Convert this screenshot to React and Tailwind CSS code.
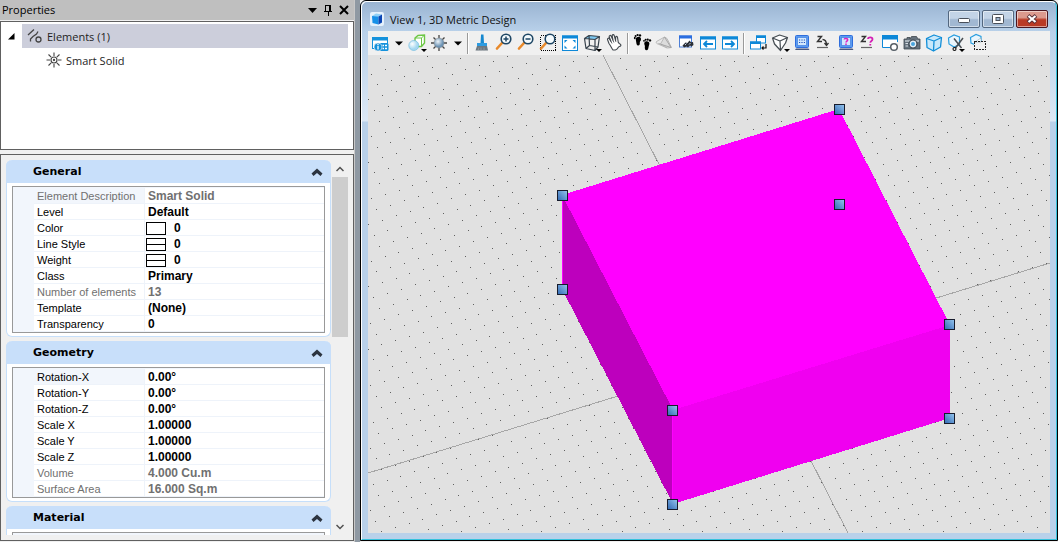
import { useState } from "react";

const general = [
  { label: "Element Description", value: "Smart Solid", readOnly: true },
  { label: "Level", value: "Default" },
  { label: "Color", value: "0", swatch: "box" },
  { label: "Line Style", value: "0", swatch: "line" },
  { label: "Weight", value: "0", swatch: "line" },
  { label: "Class", value: "Primary" },
  { label: "Number of elements", value: "13", readOnly: true },
  { label: "Template", value: "(None)" },
  { label: "Transparency", value: "0" },
];

const geometry = [
  { label: "Rotation-X", value: "0.00°" },
  { label: "Rotation-Y", value: "0.00°" },
  { label: "Rotation-Z", value: "0.00°" },
  { label: "Scale X", value: "1.00000" },
  { label: "Scale Y", value: "1.00000" },
  { label: "Scale Z", value: "1.00000" },
  { label: "Volume", value: "4.000 Cu.m", readOnly: true },
  { label: "Surface Area", value: "16.000 Sq.m", readOnly: true },
];

const Tri = ({ x = 13, y = 16 }) => (
  <path d={`M${x} ${y}h6l-3 3z`} fill="#000" />
);

const Lens = ({ x = 12, y = 6, children }) => (
  <g>
    <path d={`M${x - 4} ${y + 4}L${x - 9} ${y + 9.5}`} stroke="#e8892b" strokeWidth="2.6" strokeLinecap="round" />
    <circle cx={x} cy={y} r="4.8" fill="#f4fafd" stroke="#1e4664" strokeWidth="1.6" />
    {children}
  </g>
);

const Arrowed = ({ d }) => (
  <g>
    <rect x="2.5" y="4" width="15" height="12" fill="#fff" stroke="#0d88d8" />
    <path d="M2 3.5h16v3H2z" fill="#0d88d8" />
    <path d={d} stroke="#0d88d8" strokeWidth="1.8" fill="none" />
  </g>
);

const Keypad = ({ children }) => (
  <g>
    <rect x="3.5" y="2.5" width="13" height="12" rx="1" fill="#5b9cf0" stroke="#2f6ddc" />
    <rect x="5.5" y="4.5" width="9" height="8" fill="#d3e9fd" stroke="#4c88e4" strokeWidth=".8" />
    <path d="M4 15.500h12.500l1 1.500H3z" fill="#4a5a80" />
    {children}
  </g>
);

const icons = {
  attributes: (
    <g>
      <rect x="2.5" y="4.5" width="15" height="11" fill="#fff" stroke="#1592dc" />
      <path d="M2 4h16v3.5H2z" fill="#1592dc" />
      <rect x="9" y="10" width="9.5" height="8" rx="1.5" fill="#1592dc" />
      <circle cx="8" cy="14" r="4" fill="#1592dc" stroke="#f0f0f0" strokeWidth=".6" />
      <path d="M8 11v1.2M8 13v3.6M12.5 12.5h1.5M12.5 15.5h1.5M15 12.5h2M15 15.5h2" stroke="#fff" strokeWidth="1.3" />
    </g>
  ),
  style: (
    <g>
      <path d="M8 5l3-2.5 6.5-.5v8l-3 3.5H8z" fill="#fff" stroke="#6cc644" strokeWidth="1.4" />
      <path d="M8 5h6.5v8M14.5 5l3-3" fill="none" stroke="#6cc644" />
      <circle cx="6.8" cy="12.5" r="5" fill="url(#ball)" stroke="#75bde0" strokeWidth=".7" />
      <Tri x={14} y={16} />
    </g>
  ),
  brightness: (
    <g>
      <path d="M10 2v16M2 10h16M4.500 4.500l11 11M15.500 4.500l-11 11" stroke="#444" strokeWidth="1.3" />
      <circle cx="10" cy="10" r="5" fill="url(#steel)" stroke="#888" strokeWidth=".5" />
    </g>
  ),
  brush: (
    <g>
      <path d="M9 1.5h2.500l.5 8.500H8.500z" fill="#1688cf" />
      <path d="M5 10h10v3H5z" fill="#2d9be0" />
      <path d="M5 13h10l1 4.500H3.500z" fill="#6d777f" />
      <path d="M6 17.500l1-3M9 17.500v-3M12 17.500v-3" stroke="#9aa3aa" strokeWidth=".7" />
    </g>
  ),
  zoomIn: <Lens><path d="M9.500 6h5M12 3.500v5" stroke="#1e4664" strokeWidth="1.5" /></Lens>,
  zoomOut: <Lens><path d="M9.500 6h5" stroke="#1e4664" strokeWidth="1.5" /></Lens>,
  zoomWindow: (
    <g>
      <rect x="2.5" y="2.5" width="15" height="15" fill="none" stroke="#000" strokeDasharray="1 1" shapeRendering="crispEdges" />
      <Lens />
    </g>
  ),
  fit: (
    <g>
      <rect x="2.5" y="3" width="15" height="14.5" fill="#fff" stroke="#0d88d8" />
      <path d="M2 2.500h16v3H2z" fill="#0d88d8" />
      <path d="M4.500 7h3l-3 3zM15.500 7h-3l3 3zM4.500 15.500h3l-3-3zM15.500 15.500h-3l3-3z" fill="#0d88d8" />
    </g>
  ),
  rotate: (
    <g>
      <path d="M2.500 5.500L7 2.500l10.500 1L13 6.500z" fill="#7cc8f2" />
      <path d="M2.500 5.500l10.500 1v11L4 15.500zM2.500 5.500L7 2.500l10.500 1L13 6.500M17.500 3.500L16 14l-3 3.500M7 2.500l.5 10L4 15.500M7.500 12.500L16 14" fill="none" stroke="#37424c" strokeWidth="1.2" strokeLinejoin="round" />
      <Tri x={14} y={16} />
    </g>
  ),
  pan: (
    <g fill="#fff" stroke="#40474d" strokeWidth="1.1" strokeLinejoin="round">
      <path d="M9 17C7.500 15 6.500 12.500 5 10.500L3.500 6.500c-.2-1.500 1.300-1.800 1.900-.6L7 8.500 5.200 3.800C5 2.300 6.600 1.900 7.200 3.200L9 7.200 8.200 2.800c0-1.400 1.500-1.600 2-.3l1.400 5 .1-3.300c.3-1.200 1.600-1 1.800.1l.8 5.200 1.200 1.200c1.200.4 1.900 1.500 1 2.300-.7.700-1.700.4-2.300 1.500-.6 1.200-1.700 2.200-2.900 2.500z" />
      <path d="M7 8.500l1 2M9 7.200l.9 2.300M11.600 7.500l.3 1.500" fill="none" strokeWidth=".8" />
    </g>
  ),
  walk: (
    <g fill="#000">
      <path d="M4.800 4.300C6.800 3 9.300 4 9 6.400c-.1 1.400-1.200 1.800-1.200 3 .2 1.700-.3 3.200-1.700 3.100-1.600-.1-1.600-2-1.900-3.600C3.900 7.200 3.200 5.500 4.800 4.300z" />
      <path d="M17 9.300c-1.300-1.700-4.200-1.500-4.700.7-.3 1.500.7 2.200.6 3.400-.3 1.600 0 3.900 1.600 3.900 1.700 0 1.800-2 2.100-3.500.2-1.500 1.400-2.900.4-4.500z" />
      <ellipse cx="2.8" cy="5" rx=".9" ry="1.2" /><circle cx="3.600" cy="2.900" r="1" /><circle cx="5.600" cy="2" r="1.100" /><circle cx="8" cy="2.400" r="1.200" />
      <circle cx="12" cy="7.800" r=".9" /><circle cx="13.600" cy="6.800" r="1" /><circle cx="15.700" cy="6.600" r="1.100" /><circle cx="18" cy="7.400" r="1.200" />
    </g>
  ),
  fly: (
    <g stroke="#b4b4b4" strokeWidth=".9" strokeLinejoin="round">
      <path d="M10.500 4L2.500 8.500c-.8 1 .2 2.500 1.500 2.500l9 4z" fill="#e8e8e8" />
      <path d="M10.500 4l2.500 1.500 4.500 9-4 .5-7-4z" fill="#dcdcdc" />
      <path d="M10.500 4l6.500 10.500L4.500 10.500" fill="none" stroke="#a0a0a0" />
    </g>
  ),
  navigate: (
    <g>
      <rect x="3.5" y="3" width="12" height="11" fill="#fff" stroke="#4d7fd6" />
      <path d="M3 2.500h13v3H3z" fill="#2a6de0" />
      <path d="M6.500 12.500l3-3 2 .5 2-2.500 1.500 1.800 2-.3.500 3-2 1.500-1.500-1-2 2-1.500-1-2.500 1z" fill="#2b3038" />
      <path d="M9 12l1.500-1.500M13 11.500l1.500-1.500" stroke="#c8d4e8" />
    </g>
  ),
  previous: <Arrowed d="M15 11H6M9 8l-3 3 3 3" />,
  next: <Arrowed d="M5 11h9M11 8l3 3-3 3" />,
  copyView: (
    <g>
      <rect x="8.5" y="3" width="9" height="7" fill="#fff" stroke="#0d88d8" />
      <path d="M8 2.500h10v2.500H8z" fill="#0d88d8" />
      <rect x="2.5" y="9" width="10" height="7" fill="#fff" stroke="#0d88d8" />
      <path d="M2 8.500h11v2.500H2z" fill="#0d88d8" />
      <path d="M18 11v4h-4M15.500 13.500L14 15l1.500 1.500" fill="none" stroke="#111" strokeWidth="1.2" />
    </g>
  ),
  perspective: (
    <g>
      <path d="M2.500 5L9.500 2l8 2.500-7 13z" fill="#fff" />
      <path d="M2.500 5L9.500 2l8 2.500L10 8zM2.500 5L4.500 11l6 6.500 5-7.500 2-5.500M10 8l.5 9.500" fill="none" stroke="#454c52" strokeWidth="1.2" strokeLinejoin="round" />
      <Tri x={14} y={16} />
    </g>
  ),
  saveView: (
    <Keypad>
      <path d="M7 7h6.500M7 9.500h6.500" stroke="#1b4fc0" strokeWidth="1.2" strokeDasharray="1.2 1.2" />
    </Keypad>
  ),
  depth: (
    <g fill="none" stroke="#333">
      <path d="M3.500 3.500h4l-4 5h4.500" strokeWidth="1.4" />
      <path d="M8.500 6.500c2.500 0 4 1.500 4 5.500M10.500 10l2 2.500 2-2.500" strokeWidth="1.300" />
      <path d="M3 14.500h11" stroke="#666" strokeWidth="1.200" />
    </g>
  ),
  showView: (
    <Keypad>
      <path d="M8.300 6.500c0-1.500 3.400-1.500 3.400.3 0 1.300-1.700 1.200-1.700 2.700M10 10.600v1.300" fill="none" stroke="#e01fc0" strokeWidth="1.500" />
    </Keypad>
  ),
  showDepth: (
    <g fill="none">
      <path d="M3.500 3.500h4l-4 5h4.500" stroke="#333" strokeWidth="1.400" />
      <path d="M10 6c0-2.200 4.500-2.200 4.500.3 0 1.700-2.200 1.700-2.200 3.500M12.300 11v1.600" stroke="#d41fb4" strokeWidth="1.800" />
      <path d="M3 14.500h11" stroke="#666" strokeWidth="1.200" />
    </g>
  ),
  viewSettings: (
    <g>
      <path d="M2.500 5v9.500H10M17.500 5v4" fill="none" stroke="#0d88d8" />
      <path d="M3 6h14v8H3z" fill="#fff" />
      <path d="M2 2h16v4.500H2z" fill="#0d88d8" />
      <circle cx="14" cy="14" r="3.300" fill="#fff" stroke="#555e66" strokeWidth="1.500" />
    </g>
  ),
  camera: (
    <g>
      <path d="M2 6h3V4.500h3V6l1.500-2.500h5L16 6h2v10H2z" fill="#66727d" stroke="#3d464e" strokeWidth=".8" />
      <path d="M3 8h14" stroke="#d6dde3" strokeWidth="1.200" />
      <circle cx="11" cy="11" r="4" fill="#e4eef5" stroke="#39434c" strokeWidth="1.200" />
      <circle cx="11" cy="11" r="2" fill="#4aa5dd" />
      <path d="M3.500 10.500h2.500M3.500 13h2.500" stroke="#d6dde3" />
    </g>
  ),
  clipVolume: (
    <g stroke="#138fd8" strokeWidth="1.300" strokeLinejoin="round">
      <path d="M2.500 5.500L10 2l7.500 2.500-1 9.500L9.500 18 3 14.500z" fill="#c9e8fa" />
      <path d="M2.500 5.500L10 8l7.500-3.500M10 8l-.5 10" fill="none" />
    </g>
  ),
  clipMask: (
    <g>
      <path d="M2.500 5l5.500-3 5.500 2v7.500L8 14l-5-3z" fill="#eaf6fd" stroke="#2b9fe0" strokeWidth="1.200" />
      <path d="M8 5.500l7.500 9.500M17 5l-7.500 10" stroke="#4a4f54" strokeWidth="1.500" />
      <circle cx="8.500" cy="16" r="1.500" fill="none" stroke="#111" strokeWidth="1.100" />
      <Tri x={13} y={16} />
    </g>
  ),
  clipToggle: (
    <g>
      <path d="M2.500 4.500L8 1.500l5 2v5L8 12l-5-2z" fill="#eaf6fd" stroke="#2b9fe0" strokeWidth="1.200" />
      <path d="M6 8.500h11.500v8H6z" fill="#f0f0f0" />
      <path d="M7 9l6-4v4z" fill="#fff" stroke="#8ab" strokeWidth=".6" />
      <rect x="6.500" y="8.500" width="11" height="8" fill="none" stroke="#222" strokeDasharray="2 1" shapeRendering="crispEdges" />
    </g>
  ),
};

const groups = [
  [
    ["View Attributes", "attributes", true],
    ["Display Style", "style"],
    ["Adjust Brightness", "brightness", true],
  ],
  [
    ["Update View", "brush"],
    ["Zoom In", "zoomIn"],
    ["Zoom Out", "zoomOut"],
    ["Window Area", "zoomWindow"],
    ["Fit View", "fit"],
    ["Rotate View", "rotate"],
    ["Pan View", "pan"],
  ],
  [
    ["Walk", "walk"],
    ["Fly", "fly"],
    ["Navigate View", "navigate"],
    ["View Previous", "previous"],
    ["View Next", "next"],
  ],
  [
    ["Copy View", "copyView"],
    ["Change Perspective", "perspective"],
    ["Set Display Depth", "saveView"],
    ["Set Active Depth", "depth"],
    ["Show Display Depth", "showView"],
    ["Show Active Depth", "showDepth"],
    ["View Settings", "viewSettings"],
    ["Camera", "camera"],
    ["Clip Volume", "clipVolume"],
    ["Clip Mask", "clipMask"],
    ["Toggle Clip", "clipToggle"],
  ],
];

function Swatch({ type }) {
  return (
    <span className="mr-2 flex h-[13px] w-5 flex-col justify-center border border-black bg-white">
      {type === "line" && <span className="h-px bg-black" />}
    </span>
  );
}

function Section({ title, rows }) {
  const [open, setOpen] = useState(true);
  return (
    <section className="mb-1 rounded-md border-x border-b border-[#c6dffa] bg-white">
      <button
        type="button"
        aria-expanded={open}
        onClick={() => setOpen(!open)}
        className="-mx-px flex h-[23px] w-[calc(100%+2px)] items-center justify-between rounded-t-md bg-[#c8dffa] pt-[2px] pr-2 pl-[27px] font-['DejaVu_Sans',sans-serif] text-[11px] font-bold text-black"
      >
        {title}
        <svg viewBox="0 0 12 10" className={open ? "h-[10px] w-3" : "h-[10px] w-3 rotate-180"}>
          <path d="M.5 5.5L6 .5l5.500 5-2 2.500L6 5 2.500 8z" fill="#2c3440" />
        </svg>
      </button>
      {open && (
        <div className="px-[5px] py-[3px]">
          <div className="min-h-5 border border-[#999] bg-[#f2f6fc] pt-px pl-[21px]">
            <table className="w-full table-fixed border-separate border-spacing-0 bg-white font-['Liberation_Sans',sans-serif] text-xs leading-[13px]">
              <tbody>
                {rows.map((r, i) => (
                  <tr key={r.label} className={r.readOnly ? "h-4 text-[#707070]" : "h-4 text-black"}>
                    <th
                      scope="row"
                      className={
                        "w-[111px] border-r border-b border-[#eef3fa] p-0 pt-[2px] pl-[3px] text-left text-[11px] font-normal whitespace-nowrap " +
                        (i === 0 ? "bg-[#f2f6fc]" : "")
                      }
                    >
                      {r.label}
                    </th>
                    <td className={"border-b border-[#eef3fa] p-0 pt-[2px] font-bold whitespace-nowrap " + (r.swatch ? "pl-px" : "pl-[3px]")}>
                      <span className="flex h-[13px] items-center">
                        {r.swatch && <Swatch type={r.swatch} />}
                        {r.value}
                      </span>
                    </td>
                  </tr>
                ))}
              </tbody>
            </table>
          </div>
        </div>
      )}
    </section>
  );
}

function PropertiesPanel() {
  return (
    <aside className="flex w-[354px] shrink-0 flex-col bg-[#f0f0f0]">
      <header className="flex h-5 items-center justify-between bg-[#bfbfbf] pr-1 pl-[2px]">
        <h1 className="text-[11px]">Properties</h1>
        <div className="flex items-center gap-1">
          <button type="button" aria-label="Window position" className="flex w-3 justify-center">
            <svg viewBox="0 0 9 5" className="h-[5px] w-[9px]"><path d="M0 0h9L4.500 5z" /></svg>
          </button>
          <button type="button" aria-label="Auto hide" className="flex w-3 justify-center">
            <svg viewBox="0 0 8 12" className="h-3 w-2" fill="none" stroke="#000" shapeRendering="crispEdges">
              <path d="M1.500 7V1.500h5V7M5.500 1.500V7M0 7.500h8M4 8v4" />
            </svg>
          </button>
          <button type="button" aria-label="Close" className="flex w-3 justify-center">
            <svg viewBox="0 0 10 10" className="size-[10px]"><path d="M1 1l8 8M9 1L1 9" stroke="#000" strokeWidth="2" /></svg>
          </button>
        </div>
      </header>

      {/* Element tree */}
      <div className="mt-px h-[129px] border border-[#606060] bg-white pt-[2px] pr-[5px]">
        <div className="flex h-6 items-center">
          <button type="button" aria-label="Collapse Elements" className="flex w-[21px] justify-center">
            <svg viewBox="0 0 7 7" className="size-[7px]"><path d="M6.500 0v6.500H0z" /></svg>
          </button>
          <div className="flex h-6 flex-1 items-center gap-1 bg-[#cccedb] pl-[5px] text-[11px] text-[#1e1e1e]">
            <svg viewBox="0 0 16 16" className="size-4" fill="none" stroke="#444" strokeWidth="1.3">
              <path d="M1 7l6-5.500M3.500 13.500v-2.500l2.500-2.500 3.500-2.500 1.500-2.500" />
              <circle cx="11.500" cy="11.500" r="2.500" />
            </svg>
            <span className="pt-[2px]">Elements (1)</span>
          </div>
        </div>
        <div className="flex h-6 items-center gap-1 pl-[45px] text-[11px] text-[#1e1e1e]">
          <svg viewBox="0 0 16 16" className="size-4" fill="none" stroke="#444" strokeWidth="1.100">
            <circle cx="8" cy="8" r="3" />
            <circle cx="8" cy="8" r=".6" />
            <path d="M8 .5V4M8 12v3.500M.5 8H4M12 8h3.500M2.500 2.500l2.700 2.700M10.800 10.800l2.700 2.700M13.500 2.500l-2.700 2.700M5.200 10.800l-2.700 2.700" />
          </svg>
          <span className="pt-[2px]">Smart Solid</span>
        </div>
      </div>

      <div className="mt-1 mb-px flex min-h-0 flex-1 gap-px border border-[#606060] p-[5px]">
        <div className="min-w-0 flex-1 overflow-hidden">
          <Section title="General" rows={general} />
          <Section title="Geometry" rows={geometry} />
          <Section title="Material" rows={[]} />
        </div>
        {/* Scrollbar */}
        <div className="flex w-4 flex-col">
          <button type="button" aria-label="Scroll up" className="flex h-[17px] items-center justify-center">
            <svg viewBox="0 0 8 6" className="h-[6px] w-2"><path d="M.5 5L4 1.500 7.500 5" fill="none" stroke="#505050" strokeWidth="1.500" /></svg>
          </button>
          <div className="flex-1">
            <div className="h-40 bg-[#cdcdcd]" />
          </div>
          <button type="button" aria-label="Scroll down" className="flex h-[17px] items-center justify-center">
            <svg viewBox="0 0 8 6" className="h-[6px] w-2"><path d="M.5 1L4 4.500 7.500 1" fill="none" stroke="#505050" strokeWidth="1.500" /></svg>
          </button>
        </div>
      </div>
    </aside>
  );
}

function Toolbar() {
  return (
    <div role="toolbar" aria-label="View tools" className="flex h-6 items-center overflow-hidden bg-[#f0f0f0] pl-px">
      {groups.map((group, i) => (
        <div key={i} className="flex shrink-0 items-center">
          {i > 0 && <span className="mx-[2px] h-[21px] w-[2px] border-l border-[#9a9a9a] bg-white" />}
          {group.map(([label, icon, menu]) => (
            <div key={label} className="flex items-center">
              <button type="button" title={label} aria-label={label} className="flex w-[22px] justify-center">
                <svg viewBox="0 0 20 20" className="size-5" fill="none">{icons[icon]}</svg>
              </button>
              {menu && (
                <button type="button" aria-label={`${label} options`} className="flex w-[15px] justify-center">
                  <svg viewBox="0 0 8 5" className="h-[5px] w-2"><path d="M0 .5h8l-4 4z" /></svg>
                </button>
              )}
            </div>
          ))}
        </div>
      ))}
    </div>
  );
}

// Grid basis in view pixels, measured from the design origin
const ORIGIN = [387.5, 298.5];
const U = [13.85, -4.3];
const V = [5.5, 10.75];

function gridPath() {
  let d = "";
  for (let a = -60; a <= 60; a++) {
    for (let b = -60; b <= 60; b++) {
      const x = Math.floor(ORIGIN[0] + a * U[0] + b * V[0]);
      const y = Math.floor(ORIGIN[1] + a * U[1] + b * V[1]);
      if (x >= 0 && x < 682 && y >= 0 && y < 478) d += `M${x} ${y}h1v1h-1z`;
    }
  }
  return d;
}

const dots = gridPath();

const handles = [
  [194, 140],
  [471, 54],
  [471, 149],
  [581, 269],
  [581, 363],
  [304, 355],
  [304, 449],
  [194, 234],
];

function Viewport() {
  return (
    <svg
      viewBox="0 0 682 478"
      preserveAspectRatio="xMidYMid slice"
      className="block min-h-0 w-full flex-1 bg-[#e1e1e1]"
      shapeRendering="crispEdges"
      role="img"
      aria-label="Smart Solid in isometric view"
    >
      <path d={dots} fill="#606060" />
      <path d="M0 418L682 208M235 0L480 478" stroke="#a6a6a6" />
      <path d="M194 140L471 54 582 270 305 355z" fill="#ff00ff" />
      <path d="M194 140L305 355V449L194 234z" fill="#bd00bd" />
      <path d="M305 355L582 270V363L305 449z" fill="#f000f0" />
      <path d="M194.500 140V234M304.500 355V449" stroke="#ff00ff" />
      {handles.map(([x, y]) => (
        <rect key={`${x}-${y}`} x={x - 4.5} y={y - 4.5} width="10" height="10" fill="url(#grip)" stroke="#161b2c" />
      ))}
    </svg>
  );
}

function ViewWindow() {
  const button = "flex h-[18px] w-8 items-center justify-center rounded-xs border shadow-[inset_0_0_0_1px_#ffffff80] ";
  const glass = "border-[#53677f] bg-linear-to-b from-[#c3d4e7] from-45% to-[#a1b8d2] to-55%";
  return (
    <main className="mb-px flex min-w-0 flex-1 flex-col rounded-t-md border border-black bg-[#b9d1ea]">
      <div className="flex min-h-0 flex-1 flex-col rounded-t-md border border-t-white border-r-[#36c2dc] border-b-[#36c2dc] border-l-white bg-[linear-gradient(#9ab4d2_0,#b9d1ea_30px,#dce8f5_119px,#b9d1ea_120px)] px-[6px] pb-[6px]">
        <header className="flex h-[29px] items-center justify-between px-[2px]">
          <div className="flex items-center gap-[6px] pt-1">
            <svg viewBox="0 0 14 14" className="size-[14px]">
              <rect width="14" height="14" rx="2" fill="#e4f1fc" />
              <path d="M2 4l4-2.500 6 1L8.500 4.500z" fill="#8fd0f7" />
              <path d="M2 4l6.500.5v8L2.500 11z" fill="#1690e8" />
              <path d="M8.500 4.500L12 2.500v8l-3.500 2z" fill="#0b46b4" />
            </svg>
            <h2 className="pt-[2px] text-[11px] leading-4 text-[#111]">View 1, 3D Metric Design</h2>
          </div>
          <div className="flex gap-[2px] pt-1">
            <button type="button" aria-label="Minimize" className={button + glass}>
              <svg viewBox="0 0 12 6" className="mt-1 h-[6px] w-3"><rect x=".5" y=".5" width="11" height="4" rx="1" fill="#fff" stroke="#484f59" /></svg>
            </button>
            <button type="button" aria-label="Maximize" className={button + glass}>
              <svg viewBox="0 0 12 10" className="h-[10px] w-3">
                <rect x=".5" y=".5" width="11" height="9" rx="1" fill="#fff" stroke="#484f59" />
                <rect x="4" y="3.500" width="4" height="3" fill="#9db4cf" stroke="#484f59" />
              </svg>
            </button>
            <button type="button" aria-label="Close view" className={button + "border-[#4b1620] bg-linear-to-b from-[#dc9a8e] from-40% to-[#b93a25] to-55%"}>
              <svg viewBox="0 0 12 10" className="h-[10px] w-3">
                <path d="M2 1.500l8 7M10 1.500l-8 7" stroke="#5a3038" strokeWidth="4" />
                <path d="M2.500 2l7 6M9.500 2l-7 6" stroke="#fff" strokeWidth="2.200" />
              </svg>
            </button>
          </div>
        </header>
        <Toolbar />
        <Viewport />
      </div>
    </main>
  );
}

export default function App() {
  return (
    <div className="flex h-screen overflow-hidden bg-[#f0f0f0] font-['Open_Sans',sans-serif] text-black">
      <svg className="absolute size-0" aria-hidden="true">
        <defs>
          <linearGradient id="grip" x1="0" y1="1" x2="1" y2="0">
            <stop offset="0" stopColor="#2f68b4" />
            <stop offset="1" stopColor="#96c6ee" />
          </linearGradient>
          <radialGradient id="ball" cx=".35" cy=".35">
            <stop offset="0" stopColor="#fff" />
            <stop offset="1" stopColor="#a5d8f0" />
          </radialGradient>
          <radialGradient id="steel" cx=".4" cy=".35">
            <stop offset="0" stopColor="#eef5fa" />
            <stop offset="1" stopColor="#6d93b4" />
          </radialGradient>
        </defs>
      </svg>
      <PropertiesPanel />
      <div className="w-[6px] shrink-0 border-l border-[#c8c8c8] bg-[#8f99a3]" />
      <ViewWindow />
    </div>
  );
}
